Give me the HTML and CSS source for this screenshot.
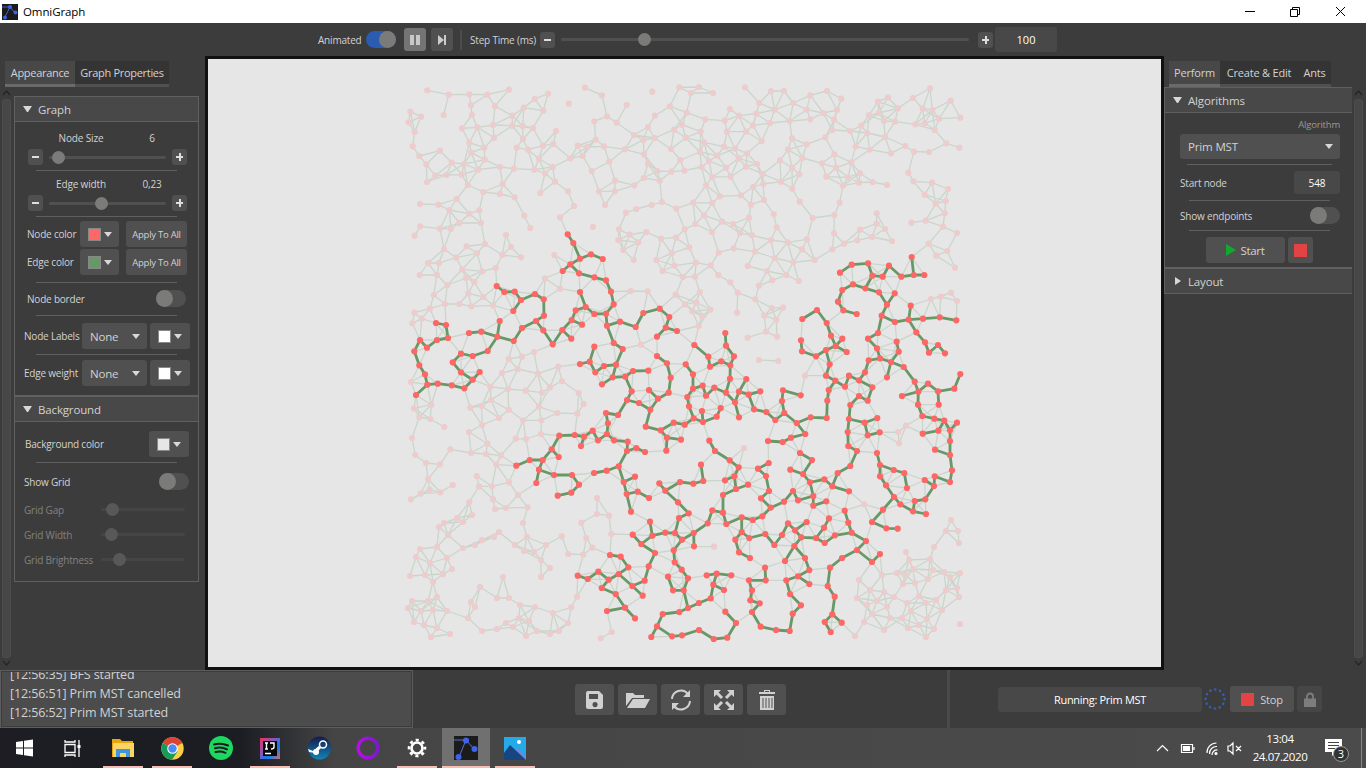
FILE: index.html
```html
<!DOCTYPE html>
<html lang="en">
<head>
<meta charset="utf-8">
<title>OmniGraph</title>
<link rel="stylesheet" href="styles.css">
</head>
<body>
<header class="titlebar">
  <svg class="app-icon" width="16" height="16" viewBox="0 0 16 16"><rect width="16" height="16" fill="#1b1b1b"/><path d="M0 3H8L3 13M8 3l5 6" stroke="#4a62b8" fill="none"/><g fill="#3c63e8"><circle cx="8" cy="3" r="2"/><circle cx="3" cy="13.500" r="2"/><circle cx="13.500" cy="8.500" r="2"/></g></svg>
  <span class="title">OmniGraph</span>
  <svg class="winctl" width="104" height="14" viewBox="0 0 104 14" fill="none" stroke="#000"><path d="M1 6.500h10M46.500 4.500h7v7h-7zM48.500 4v-1.500h7v7h-2M92 2l9 9m0-9l-9 9"/></svg>
</header>

<section class="toolbar">
  <span class="small animated">Animated</span>
  <span class="toggle on"></span>
  <span class="btn tb active"><svg width="12" height="12"><path d="M1 1h4v10H1zM7 1h4v10H7z" fill="#c8c8c8"/></svg></span>
  <span class="btn tb"><svg width="12" height="12"><path d="M2 1l6 5-6 5zM8 1h2v10H8z" fill="#ccc"/></svg></span>
  <span class="vbar"></span>
  <span class="small steptime">Step Time (ms)</span>
  <span class="btn step minus"></span>
  <span class="slider long"><i class="knob"></i></span>
  <span class="btn step plus"></span>
  <span class="field ms">100</span>
</section>

<main class="main">
  <aside class="left">
    <nav class="tabs"><span class="tab sel t-app">Appearance</span><span class="tab t-prop">Graph Properties</span></nav>
    <div class="left-body">
      <div class="scroll"><svg width="9" height="6"><path d="M1 5l3.500-4L8 5" fill="none" stroke="#252525" stroke-width="1.300"/></svg><i></i><svg width="9" height="6"><path d="M1 1l3.500 4L8 1" fill="none" stroke="#252525" stroke-width="1.300"/></svg></div>
      <div class="accordion">
        <h2 class="head"><i class="tri down"></i>Graph</h2>
        <div class="body graph-body">
          <div class="cap"><span class="c1">Node Size</span><span class="c2">6</span></div>
          <div class="srow"><span class="btn step minus"></span><span class="slider s1"><i class="knob"></i></span><span class="btn step plus"></span></div>
          <hr>
          <div class="cap"><span class="c1">Edge width</span><span class="c2">0,23</span></div>
          <div class="srow"><span class="btn step minus"></span><span class="slider s2"><i class="knob"></i></span><span class="btn step plus"></span></div>
          <hr>
          <div class="row colors"><span class="small lab">Node color</span><span class="btn pick"><i class="sw red"></i><i class="tri down"></i></span><span class="btn apply">Apply To All</span></div>
          <div class="row colors second"><span class="small lab">Edge color</span><span class="btn pick"><i class="sw green"></i><i class="tri down"></i></span><span class="btn apply">Apply To All</span></div>
          <hr class="h3">
          <div class="row border-row"><span class="small">Node border</span><span class="toggle"></span></div>
          <hr class="h4">
          <div class="row combos"><span class="small lab">Node Labels</span><span class="btn combo">None<i class="tri down"></i></span><span class="btn pick"><i class="sw white"></i><i class="tri down"></i></span></div>
          <hr class="h5">
          <div class="row combos last"><span class="small lab">Edge weight</span><span class="btn combo">None<i class="tri down"></i></span><span class="btn pick"><i class="sw white"></i><i class="tri down"></i></span></div>
        </div>
        <h2 class="head bg-head"><i class="tri down"></i>Background</h2>
        <div class="body bg-body">
          <div class="row bgcolor"><span class="small">Background color</span><span class="btn pick"><i class="sw grey"></i><i class="tri down"></i></span></div>
          <hr class="h6">
          <div class="row grid-row"><span class="small">Show Grid</span><span class="toggle"></span></div>
          <div class="row dim g1"><span class="small">Grid Gap</span><span class="slider"><i class="knob"></i></span></div>
          <div class="row dim g2"><span class="small">Grid Width</span><span class="slider"><i class="knob"></i></span></div>
          <div class="row dim g3"><span class="small">Grid Brightness</span><span class="slider"><i class="knob"></i></span></div>
        </div>
      </div>
    </div>
  </aside>

  <div class="canvas"><svg id="graph" width="953" height="608" viewBox="208 59 953 608"></svg></div>

  <aside class="right">
    <nav class="tabs"><span class="tab sel t-perf">Perform</span><span class="tab t-edit">Create &amp; Edit</span><span class="tab t-ants">Ants</span></nav>
    <div class="right-body">
      <div class="accordion">
        <h2 class="head"><i class="tri down"></i>Algorithms</h2>
        <div class="body alg-body">
          <div class="alg-cap">Algorithm</div>
          <div class="btn alg">Prim MST<i class="tri down"></i></div>
          <hr class="a1">
          <div class="row start-row"><span class="small">Start node</span><span class="field">548</span></div>
          <hr class="a2">
          <div class="row end-row"><span class="small">Show endpoints</span><span class="toggle"></span></div>
          <hr class="a3">
          <div class="row run"><span class="btn go"><svg width="10" height="12"><path d="M0 0l10 6-10 6z" fill="#0fa92f"/></svg>Start</span><span class="btn halt"><i></i></span></div>
        </div>
        <h2 class="head lay"><i class="tri side"></i>Layout</h2>
      </div>
      <div class="scroll"><svg width="9" height="6"><path d="M1 5l3.500-4L8 5" fill="none" stroke="#252525" stroke-width="1.300"/></svg><i></i><svg width="9" height="6"><path d="M1 1l3.500 4L8 1" fill="none" stroke="#252525" stroke-width="1.300"/></svg></div>
    </div>
  </aside>
</main>

<footer class="bottom">
  <div class="log"><div class="log-inner"><p>[12:56:35] BFS started</p><p>[12:56:51] Prim MST cancelled</p><p>[12:56:52] Prim MST started</p></div></div>
  <div class="actions">
    <span class="btn"><svg width="20" height="20" fill="#d0d0d0"><path fill-rule="evenodd" d="M3 1h11l4 4v12q0 2-2 2H3q-2 0-2-2V3q0-2 2-2zm1 3v5h9V4zm6 8a2.600 2.600 0 1 0 .1 0z"/></svg></span>
    <span class="btn"><svg width="24" height="20" fill="#d0d0d0"><path d="M0 16V3h7l2 2h9v3H6zM7 9h17l-5 9H1z"/></svg></span>
    <span class="btn"><svg width="22" height="22" fill="none" stroke="#d0d0d0" stroke-width="2"><path d="M2 10a9 9 0 0 1 16-5M20 12a9 9 0 0 1-16 5"/><path d="M20 1v7h-7zM2 21v-7h7z" fill="#d0d0d0" stroke="none"/></svg></span>
    <span class="btn"><svg width="22" height="22" stroke="#d0d0d0" stroke-width="3" fill="#d0d0d0"><path d="M4 4l5 5M18 4l-5 5M4 18l5-5M18 18l-5-5"/><path stroke="none" d="M1 1h7L1 8zM21 1h-7l7 7zM1 21h7l-7-7zM21 21h-7l7-7z"/></svg></span>
    <span class="btn"><svg width="18" height="22" fill="#d0d0d0"><path fill-rule="evenodd" d="M1 3h5V1h6v2h5v2H1zm6-1v1h4V2zM2 7h14v14H2zm2.500 2v10h1V9zm3 0v10h1V9zm3 0v10h1V9zm3 0v10h1V9z"/></svg></span>
  </div>
  <div class="vline"></div>
  <div class="status">
    <span class="field running">Running: Prim MST</span>
    <svg class="spin" width="24" height="24" viewBox="-12 -12 24 24" fill="none"><circle r="9.500" stroke="#355fae" stroke-width="2.600" stroke-linecap="round" stroke-dasharray="0.100 4.870"/></svg>
    <span class="btn stop"><i></i>Stop</span>
    <span class="btn lock"><svg width="12" height="15"><path d="M3 7V4.500a3 3 0 0 1 6 0V7" stroke="#7d7d7d" stroke-width="1.800" fill="none"/><path d="M0 6.500h12V15H0z" fill="#7d7d7d"/></svg></span>
  </div>
</footer>

<footer class="taskbar">
  <div class="tasks">
    <span class="task win"><svg width="17" height="18" fill="#fff"><path d="M0 3l7-1v6.500H0zM8 1.800L17 .5v8H8zM0 9.500h7V16l-7-1zM8 9.500h9v8L8 16.300z"/></svg></span>
    <span class="task tv"><svg width="17" height="17" fill="none" stroke="#fff" stroke-width="1.300"><path d="M1 4.500h10v8H1zM1 0v2h10V0M1 17v-2h10v2M15 0v17"/><path d="M13.500 5h3v3h-3z" fill="#fff" stroke="none"/></svg></span>
    <span class="task open exp"><svg width="22" height="20"><path d="M0 1h8l2 2h11v16H0z" fill="#e7a512"/><path d="M1 5h21v14H1z" fill="#fcd462"/><path d="M4 19v-8h14v8h-4v-4H8v4z" fill="#3c97dc"/></svg></span>
    <span class="task open"><svg width="23" height="23" viewBox="-11.500 -11.500 23 23"><circle r="11.200" fill="#fccd45"/><path d="M0 0L-9.700-5.600A11.200 11.200 0 0 1 9.700-5.600z" fill="#d94436"/><path d="M0 0L-9.700-5.600A11.200 11.200 0 0 0-.5 11.200L5 3z" fill="#169c58"/><circle r="5.300" fill="#fff"/><circle r="4.200" fill="#4b8bf5"/></svg></span>
    <span class="task"><svg width="24" height="24" viewBox="0 0 24 24"><circle cx="12" cy="12" r="12" fill="#1ed760"/><path d="M5 8.500q7-2 14 1M6 12.300q6-2 12 1M6.500 16q5-1.500 10 .8" fill="none" stroke="#191b20" stroke-width="2" stroke-linecap="round"/></svg></span>
    <span class="task open"><svg width="20" height="21"><defs><linearGradient id="ij" x2="1" y2="1"><stop stop-color="#ed315d"/><stop offset=".4" stop-color="#8956b8"/><stop offset=".65" stop-color="#087cfa"/><stop offset="1" stop-color="#d46a64"/></linearGradient></defs><rect width="20" height="21" fill="url(#ij)"/><rect x="3" y="3" width="14" height="15" fill="#080808"/><path d="M5 5h3M6.500 5v6M5 11h3M10 5h4v4q0 2-3 2M5 15.500h6" stroke="#fff" fill="none" stroke-width="1.400"/></svg></span>
    <span class="task"><svg width="23" height="24"><defs><linearGradient id="st" x2="0" y2="1"><stop stop-color="#15194c"/><stop offset="1" stop-color="#1185b5"/></linearGradient></defs><circle cx="11.500" cy="12" r="11.500" fill="url(#st)"/><path d="M0 13l5 2 6-5v3l-4 4-6-1z" fill="#fff"/><circle cx="8" cy="16" r="3" fill="#fff"/><circle cx="15" cy="8.500" r="3.500" fill="none" stroke="#fff" stroke-width="1.500"/><path d="M12 11l-5 5" stroke="#fff" stroke-width="3"/></svg></span>
    <span class="task"><svg width="24" height="24"><defs><linearGradient id="op"><stop stop-color="#b80de8"/><stop offset="1" stop-color="#7a1ad0"/></linearGradient></defs><circle cx="12" cy="12" r="9.800" fill="none" stroke="url(#op)" stroke-width="3.400"/></svg></span>
    <span class="task open"><svg width="20" height="20" viewBox="-10 -10 20 20" fill="none" stroke="#fff"><circle r="5.500" stroke-width="2.700"/><circle r="8" stroke-width="2.600" stroke-dasharray="3.140 3.140" stroke-dashoffset="1.570"/></svg></span>
    <span class="task open cur"><svg width="24" height="24"><path d="M0 0h24v24H0z" fill="#1b1b1b"/><path d="M0 4h12L5 21M12 4l8 9" stroke="#5873cf" fill="none"/><g fill="#3c63e8"><circle cx="12" cy="4.500" r="3"/><circle cx="4.500" cy="21" r="3"/><circle cx="20.500" cy="13" r="3"/></g></svg></span>
    <span class="task open"><svg width="22" height="23"><path d="M0 0h22v23H0z" fill="#26a9e9"/><path d="M8 15l6-4 8 9v3H8z" fill="#7287d8"/><path d="M0 16l6-8 16 15H0z" fill="#17457f"/><circle cx="15" cy="5" r="2" fill="#fff"/></svg></span>
  </div>
  <div class="tray">
    <svg width="86" height="18" fill="none" stroke="#fff" stroke-width="1.200"><path d="M1 12l5.500-5.500L12 12"/><path d="M25.500 5.500h11v8h-11zM38 8v3"/><path d="M27.500 7.500h6v4h-6z" fill="#fff"/><path d="M51 14A9.500 9.500 0 0 1 60.500 4M53.500 15A7 7 0 0 1 61 7.500M56 16A5 5 0 0 1 61.500 11" /><circle cx="60" cy="14.500" r="1" fill="#fff"/><path d="M72 7h2l3-3v11l-3-3h-2zM80 7l5 5m0-5l-5 5"/></svg>
    <div class="clock"><div>13:04</div><div>24.07.2020</div></div>
    <div class="notif"><svg width="17" height="17"><path d="M0 0h17v13h-6l-4 4v-4H0z" fill="#fff"/><path d="M3 3.500h11M3 6.500h11M3 9.500h7" stroke="#444"/></svg><b>3</b></div>
    <i class="edge"></i>
  </div>
</footer>
<script src="graph.js"></script>
</body>
</html>
```
FILE: styles.css
```css
* { box-sizing: border-box; }
body { margin: 0; width: 1366px; height: 768px; overflow: hidden; background: #3c3c3c; color: #d2d2d2; font: 11px "Open Sans", "Noto Sans", sans-serif; display: flex; flex-direction: column; }
svg { display: block; flex: none; }
p, h2 { margin: 0; font-weight: 400; }
span { white-space: nowrap; }
.titlebar { height: 23px; flex: none; background: #fff; color: #000; display: flex; align-items: center; padding-left: 2px; }
.title { margin-left: 5px; font-size: 11.5px; flex: 1; letter-spacing: -.1px; }
.winctl { margin-right: 18px; }
.small { font-size: 10px; letter-spacing: -.2px; }
.btn { background: #505050; border-radius: 3px; display: flex; align-items: center; justify-content: center; flex: none; }
.field { background: #484848; border-radius: 3px; display: flex; align-items: center; justify-content: center; color: #fff; flex: none; }
.toggle { width: 30px; height: 17px; border-radius: 9px; background: #505050; display: flex; flex: none; }
.toggle::before { content: ""; width: 17px; height: 17px; border-radius: 50%; background: #7b7b79; }
.toggle.on { background: #2b5caf; justify-content: flex-end; }
.slider { height: 3px; border-radius: 2px; background: #505050; display: flex; align-items: center; flex: none; }
.knob { width: 13px; height: 13px; border-radius: 50%; background: #7b7b79; flex: none; }
.step { width: 15px; height: 16px; }
.step::before { content: ""; width: 7px; height: 2px; background: #ddd; }
.plus::after { content: ""; width: 2px; height: 8px; background: #ddd; margin-left: -4.500px; margin-right: 2.500px; }
.tri { border: 4px solid transparent; border-bottom: 0; border-top: 5px solid #d8d8d8; width: 8px; height: 5px; flex: none; }
.tri.side { border: 4px solid transparent; border-right: 0; border-left: 6px solid #d8d8d8; width: 6px; height: 8px; }

.toolbar { height: 34px; flex: none; display: flex; align-items: center; padding: 0 0 1px 318px; }
.animated { width: 48px; }
.tb { width: 22px; height: 23px; margin-left: 8px; }
.tb + .tb { margin-left: 5px; }
.tb.active { background: #747474; }
.vbar { width: 2px; height: 20px; background: #4c4c4c; margin: 0 8px 0 7px; }
.steptime { width: 70px; }
.slider.long { width: 408px; margin: 0 9px 0 6px; padding-left: 77px; }
.ms { width: 62px; height: 25px; margin-left: 2px; }

.main { height: 613px; flex: none; display: flex; }
.left { width: 205px; flex: none; }
.canvas { width: 959px; height: 614px; border: 3px solid #111; background: #e6e6e6; flex: none; margin-top: -1px; }
.right { flex: 1; }
.tabs { display: flex; padding: 4px 0 0 5px; height: 30px; font-size: 11.500px; letter-spacing: -.15px; }
.tab { height: 26px; background: #343434; border-bottom: 3px solid #505050; display: flex; align-items: center; justify-content: center; }
.tab.sel { background: #484848; border-color: #6a6a6a; }
.left .tabs { letter-spacing: -.3px; font-size: 11px; }
.right .tabs { letter-spacing: -.2px; font-size: 11px; }
.t-app { width: 70px; } .t-prop { width: 94px; }
.left-body { display: flex; height: 583px; padding: 3px 0 2px 2px; }
.scroll { width: 9px; height: 576px; display: flex; flex-direction: column; justify-content: space-between; flex: none; }
.scroll i { width: 9px; height: 559px; border-radius: 3px; background: #474747; border: 1px solid #4d4d4d; }
.left .accordion { width: 185px; height: 486px; border: 1px solid #606060; margin: 6px 0 0 3px; }
.head { height: 25px; background: #484848; border-bottom: 1px solid #606060; display: flex; align-items: center; font-size: 11.500px; letter-spacing: -.15px; padding-left: 8px; }
.head .tri { margin-right: 6px; border-left-width: 4.500px; border-right-width: 4.500px; width: 9px; border-top-width: 6px; height: 6px; }
.head .tri.side { width: 6px; height: 8px; border-width: 4px 0 4px 6px; margin: 0 7px 0 2px; }
hr { margin: 0; height: 1px; border: 0; background: #606060; width: 141px; margin-left: 21px; }
.row { display: flex; align-items: center; }
.graph-body { height: 273px; padding-top: 7px; }
.cap { height: 18px; display: flex; align-items: center; font-size: 10px; letter-spacing: -.15px; }
.c1 { width: 76px; margin-left: 28px; text-align: center; }
.c2 { width: 50px; margin-left: 8px; text-align: center; }
.srow { display: flex; align-items: center; height: 20px; padding-left: 13px; }
.srow .slider { width: 117px; margin: 0 6px; }
.s1 .knob { margin-left: 3px; } .s2 .knob { margin-left: 46px; }
.srow + hr { margin-top: 3px; margin-bottom: 4px; }
.colors { padding-left: 12px; height: 26px; margin-top: 6px; }
.srow + hr + .colors { margin-top: 3px; }
.colors.second { margin-top: 2px; }
.colors .lab { width: 53px; }
.pick { width: 39px; height: 26px; gap: 3px; }
.sw { width: 13px; height: 13px; border: 1px solid #888; }
.red { background: #f66; } .green { background: #696; } .white { background: #fff; } .grey { background: #e6e6e6; }
.apply { width: 61px; height: 26px; font-size: 9.500px; margin-left: 7px; letter-spacing: -.25px; }
.h3 { margin-top: 7px; }
.border-row { padding: 0 12px 0 12px; justify-content: space-between; height: 17px; margin-top: 7px; }
.h4 { margin-top: 8px; }
.combos { padding-left: 9px; height: 26px; margin-top: 6px; }
.combos .lab { width: 58px; }
.h4 + .combos { margin-top: 7px; } .h5 { margin-top: 5px; }
.h5 + .combos { margin-top: 5px; }
.combo { width: 65px; height: 26px; justify-content: space-between; padding: 0 7px 0 8px; font-size: 11.500px; letter-spacing: -.2px; }
.combos .pick { width: 40px; margin-left: 3px; }
.bg-head { height: 27px; border-top: 2px solid #606060; }
.bg-body { padding-top: 9px; }
.bgcolor { padding: 0 9px 0 10px; justify-content: space-between; height: 26px; }
.bgcolor .pick { width: 40px; }
.h6 { margin-top: 5px; }
.grid-row { padding: 0 9px 0 9px; justify-content: space-between; height: 17px; margin-top: 10px; }
.dim { height: 25px; padding: 0 13px 0 9px; justify-content: space-between; opacity: .45; }
.g1 { margin-top: 7px; }
.dim .slider { width: 84px; }
.g1 .knob { margin-left: 5px; } .g2 .knob { margin-left: 4px; } .g3 .knob { margin-left: 12px; }

.t-perf { width: 51px; } .t-edit { width: 78px; } .t-ants { width: 33px; }
.right-body { display: flex; height: 583px; }
.right .accordion { width: 188px; border: 1px solid #606060; border-right: 0; border-bottom: 0; align-self: flex-start; }
.right .scroll { margin: 3px 0 0 2px; }
.alg-body { height: 154px; padding: 3px 12px 0 15px; }
.alg-cap { text-align: right; font-size: 9.500px; height: 18px; line-height: 18px; color: #999; letter-spacing: -.2px; }
.alg { height: 25px; justify-content: space-between; padding: 0 7px 0 8px; font-size: 11.500px; letter-spacing: -.15px; }
.a1 { margin: 5px 0 0 7px; width: 145px; }
.start-row { height: 23px; margin-top: 6px; justify-content: space-between; }
.start-row .field { width: 46px; height: 23px; font-size: 10px; }
.a2 { margin: 6px 0 0 9px; }
.end-row { height: 17px; margin-top: 6px; justify-content: space-between; }
.a3 { margin: 6px 0 0 9px; }
.run { margin-top: 6px; padding-left: 26px; gap: 3px; }
.go { width: 79px; height: 26px; gap: 4px; font-size: 11.500px; letter-spacing: -.3px; }
.halt { width: 25px; height: 26px; }
.halt i, .stop i { width: 13px; height: 13px; background: #e24444; }
.lay { height: 27px; border-top: 2px solid #606060; }

.bottom { height: 58px; flex: none; display: flex; }
.log { width: 413px; height: 58px; border: 1px solid #5c5c5c; padding: 1px 1px 1px 1px; flex: none; }
.log-inner { height: 54px; background: #4c4c4c; overflow: hidden; padding-left: 8px; display: flex; flex-direction: column; justify-content: flex-end; padding-bottom: 4px; }
.log p { font-size: 12.500px; line-height: 19px; height: 19px; flex: none; letter-spacing: -.12px; }
.actions { display: flex; gap: 4px; padding: 14px 0 0 162px; width: 534px; }
.actions .btn { width: 39px; height: 31px; }
.vline { width: 3px; background: #4a4a4a; }
.status { display: flex; align-items: center; padding-left: 48px; }
.running { width: 204px; height: 25px; letter-spacing: -.3px; }
.spin { margin: 0 3px 0 1px; }
.stop { width: 64px; height: 26px; gap: 6px; letter-spacing: -.2px; }
.lock { width: 25px; height: 26px; margin-left: 3px; background: #464646; }

.taskbar { height: 40px; flex: none; display: flex; justify-content: space-between; background: linear-gradient(90deg, #1d1d23 0, #1b1d23 240px, #454545 335px, #4b4b4b 1366px); color: #fff; }
.tasks { display: flex; gap: 1px; }
.task { width: 48px; height: 40px; display: flex; align-items: center; justify-content: center; }
.tv { width: 46px; margin-right: 3px; }
.task.open { background: linear-gradient(#f8bdb2, #f8bdb2) bottom center / 40px 2px no-repeat; }
.task.cur { background: linear-gradient(#f8bdb2, #f8bdb2) bottom / 100% 2px no-repeat, #707070; }
.tray { display: flex; align-items: center; }
.clock { width: 76px; text-align: center; font-size: 11.500px; line-height: 18px; letter-spacing: -.4px; }
.notif { width: 28px; height: 24px; margin: 6px 0 0 7px; position: relative; }
.notif b { position: absolute; left: 8px; top: 7px; width: 16px; height: 16px; border: 1px solid #999; border-radius: 50%; background: #333; font: 11px/14px "Open Sans", sans-serif; text-align: center; }
.edge { width: 1px; height: 40px; background: #888; margin: 0 4px 0 8px; }

.e { stroke: #cad6cb; stroke-width: 1.300; fill: none; }
.t { stroke: #669966; stroke-width: 2.800; fill: none; stroke-linecap: round; stroke-linejoin: round; }
.n { fill: #edcccd; }
.tn { fill: #ff6666; }
```
FILE: graph.js
```js
// Node coordinates are stored per tile, in units of 1/scale pixel from the tile origin.
const tiles = [
  { x: 400, y: 220, scale: 3, tree: `503,43 520,69 540,116 511,133 488,153|540,116 573,103 608,117|511,133 537,160 583,172 618,181 633,215 641,253 618,281 583,282 557,261 540,216|557,261 527,271 515,300 487,330 458,373 430,331 408,303 366,324 341,363 292,350 299,303|515,300 546,314|487,330 514,356|408,303 432,287 431,238 405,222 363,240 344,215 313,216 290,198|363,240 340,273|292,350 244,335 207,339|292,350 263,393 218,408 183,401 158,427 183,457 218,479 239,456|218,479 193,505 155,496 113,491 82,494 75,463 58,436 43,394 60,360 81,383 111,360 144,354 138,315 108,309|82,494 48,525|618,281 621,317 660,305 707,321 730,279 779,266 808,291 797,323 831,333|797,323 771,350|621,317 641,369 668,387 648,434 612,438 586,457 569,425 583,380|569,425 540,432|648,434 638,472 606,493|638,472 676,470 699,453 745,452|676,470 695,514 681,540 717,549 751,569 774,536 806,518 812,473 801,430 771,408|774,536 747,510|681,540 654,585 618,579 624,610 621,642 594,661 578,632 552,650 543,678|552,650 524,645 478,647 455,688 428,720 389,720 349,737|455,688 476,711|428,720 417,749 409,789|417,749 462,765 516,765 537,794 514,818 473,827|621,642 642,661 683,665 681,693 656,739 620,752 582,759|681,693 709,684 735,696|656,739 671,786 680,822 693,875|671,786 705,770|680,822 713,815 747,834|751,569 737,620 782,631 821,608 854,614|782,631 801,653 799,692|801,653 843,659`,
    nodes: `205,220 250,231 101,225 135,252 178,252 214,259 279,256 90,266 43,278 65,296 37,310 33,486 326,417 366,410 402,396 353,447 306,459 414,461 475,440 486,483 450,502 377,512 426,518 324,507 271,500 273,540 245,558 211,563 297,594 326,569 369,601 424,601 417,560 472,579 532,581 551,552 536,519 42,565 58,591 94,554 91,597 133,621 207,636 246,615 423,642 378,657 347,656 262,671 213,699 258,702 303,706 289,734 151,688 120,733 78,729 46,705 36,654 84,777 89,809 62,821 33,838 121,817 158,795 230,768 237,799 276,799 327,787 354,825 279,837 208,846 383,862 591,834 723,374 692,213 743,214 827,224 855,253` },
  { x: 680, y: 240, scale: 3, tree: `43,315 85,350 90,380 124,364 151,376 150,416 138,458 103,443 78,467 68,437 39,446 39,403 17,373|151,376 162,349 138,317 136,279|39,446 22,471 27,499 41,535 69,546 110,530 122,504|41,535 14,554|69,546 66,513|138,458 165,487 177,455 206,464 241,454|177,455 199,417|165,487 177,532|206,464 222,508 259,516 286,540 313,519 306,483 309,451 362,466|313,519 350,549 392,532 440,534 442,482 446,450 466,422 438,407 449,373 438,330 408,349 366,334 363,301|438,330 467,318 453,287 440,249 411,210 367,237|467,318 487,296|467,318 500,336|350,549 376,582 333,593 308,606 264,603|466,422 495,440 507,407 537,421 555,397 566,361 600,355 591,325 564,296 594,279 605,227 621,194 597,157 556,145 577,107 564,70 515,74 480,98|556,145 519,133 487,150 474,185 490,211 530,222|577,107 608,110 627,77 664,110 701,105 733,105|701,105 695,51|621,194 644,160|605,227 645,246 686,239 729,236 779,232 829,241|686,239 692,197|686,239 709,277 735,307 747,338 774,315 795,340|600,355 633,366 656,335 650,305|633,366 621,412|633,366 671,381 704,425 715,455 744,431 774,454 823,446 841,402|715,455 666,468|715,455 714,494 727,528 763,536 793,542 775,572 728,581|774,454 776,494|793,542 810,571 831,548|810,571 810,603 810,645 816,691 810,726 764,709 762,738 736,778 704,783 699,814 738,822|810,645 765,629|762,738 734,720|699,814 661,793 642,771 618,736 600,709 600,675 591,639|600,675 641,690 673,699 681,744|642,771 609,809 576,846 619,865 653,866|537,421 577,442 563,482 537,468 511,495 507,537 503,576 505,618 531,633 511,678 473,699 457,739 507,754|507,537 554,548 592,534|554,548 563,586 599,577|457,739 433,718 390,727 369,702 396,660 360,639|369,702 331,689|390,727 400,768 400,797 439,784|400,768 354,781 339,753 312,785 272,803 243,775 267,753 258,708 234,686 266,669|272,803 247,829 218,840 185,832 139,852 129,818 129,765 168,747 163,709 176,682 149,661 105,633 88,602|168,747 204,734|163,709 135,721|129,818 97,811 83,850|494,812 505,848 515,878`,
    nodes: `59,156 49,187 15,193 37,214 66,228 91,209 56,258 173,158 226,178 171,218 275,204 309,203 253,227 289,239 258,275 203,293 291,290 237,360 295,363 375,407 192,624 753,177 782,170 813,158 831,183 678,557 655,576 657,610 553,793 813,840` },
  { x: 560, y: 430, scale: 3, tree: `298,160 316,182 360,156 400,161 430,153 423,104|316,182 354,217 386,250 357,264 345,309 316,308 277,317 270,275|277,317 244,342 218,314|244,342 285,369 266,409 254,452 217,468 248,497|217,468 176,432 146,449 115,425 83,447 53,437|176,432 205,412 182,380 150,375|146,449 125,474 167,492 195,533 141,543|195,533 225,565|345,309 366,329 401,309 443,281 457,241 489,248|401,309 402,349|366,329 341,361 344,397 365,419 384,445 371,481 339,481 324,440|371,481 384,534 358,546 308,552 291,589 336,619 366,616 417,600 461,627 502,623 528,579 496,545|291,589 274,621|384,534 417,519 452,505 460,464 470,431 440,436|470,431 514,436|460,464 492,480|545,262 545,306 526,329 537,367 570,384|545,306 568,324 616,312 643,345 666,315 684,280 705,301 724,322 703,348 675,393|705,301 740,276|724,322 768,324 792,293 807,265|768,324 794,339 825,316 875,307|703,348 735,384 748,420 714,439 748,462|714,439 679,451 690,492 723,526 698,551 689,603 648,600 602,590 576,546 599,520 571,511 576,481 567,451 617,451 615,413|812,606 794,576 817,553 845,578|817,553 824,500 803,468 810,413 846,384 891,360 936,396 960,372|891,360 918,333 875,307`,
    nodes: `111,204 111,252 147,257 64,278 79,324 97,353 70,374 25,372 5,319 154,312 462,350 51,500 34,532 24,579 155,606 122,625` },
  { x: 400, y: 75, scale: 3, tree: ``,
    nodes: `82,46 146,59 208,58 262,59 327,44 131,120 213,91 285,93 216,120 186,160 232,157 279,150 282,188 337,122 337,152 371,98 404,72 444,56 430,107 368,153 399,159 506,86 369,192 350,218 384,224 429,212 460,207 468,168 417,251 458,276 403,284 435,295 465,320 421,354 504,349 522,393 480,427 31,110 63,125 26,142 44,171 38,214 58,243 79,268 120,227 155,263 106,302 81,321 139,300 185,299 192,267 214,233 208,203 253,218 254,254 234,284 203,330 250,351 300,276 342,281 308,327 300,357 344,367 373,422 391,459 170,372 115,389 60,387 148,405 208,416 238,406 243,444 178,444 153,461 120,461 61,454 44,482 132,522 255,507 200,514 231,535 168,548 117,564 84,564 59,600 111,600 187,583 198,609 247,589 287,579 223,621 307,540 333,516 318,480 363,547 463,540 435,610 480,641 142,630 579,456 555,38 606,61 621,124 650,143 680,90 583,139 587,194 612,214 561,216 533,212 548,243 511,250 575,288 628,260 645,317 597,349 644,349 615,390 703,331 731,309 678,413 709,402 755,390 786,381 829,401 854,463 828,488 783,491 739,471 689,479 657,463 655,495 670,525 715,502 701,555 815,535 769,555 788,588 823,572 849,606 674,223 702,180 730,195 764,189 744,156 765,122 810,94 838,37 757,50 732,238 744,266 772,288 779,317 814,290 853,287 841,255 813,222 822,164 846,149 857,188` },
  { x: 680, y: 75, scale: 3, tree: ``,
    nodes: `57,36 33,54 99,54 20,113 6,149 62,170 76,133 17,188 150,102 134,137 177,122 141,170 229,116 238,84 195,37 273,48 312,48 284,104 340,84 270,144 329,138 219,151 198,170 245,198 391,61 380,104 391,133 441,48 484,71 471,105 430,114 462,134 457,165 436,187 511,168 72,202 60,231 132,215 165,221 112,242 87,258 65,276 176,250 201,235 138,278 198,275 231,267 97,306 152,305 248,297 250,327 219,336 183,361 120,364 78,331 40,383 97,384 72,421 46,447 13,463 28,517 48,563 9,605 45,605 92,571 115,600 151,622 116,533 161,520 96,471 126,440 159,447 207,428 180,474 216,481 213,389 252,375 281,418 290,457 273,495 323,502 225,530 284,549 203,573 261,588 277,616 237,632 319,600 356,618 340,562 366,523 381,493 404,555 398,429 359,380 337,341 303,320 336,278 300,256 324,224 336,190 380,208 367,249 358,298 13,287 426,265 463,238 468,278 514,262 439,305 504,307 540,294 537,323 489,332 578,321 621,330 479,383 463,420 462,475 457,523 492,506 532,496 540,464 576,486 590,446 590,415 615,462 636,498 527,214 544,152 562,174 567,121 594,80 624,67 654,100 596,114 612,138 645,140 615,186 569,224 633,235 676,213 702,230 747,231 799,205 838,218 685,293 700,319 756,323 734,359 767,386 804,342 797,378 794,415 737,437 694,443 789,455 831,474 746,506 802,528 769,542 825,578 699,69 750,40 812,77 841,128 728,101 757,105 777,131 734,145 706,148 764,165` },
  { x: 0, y: 0, scale: 1, tree: ``,
    nodes: `439,527 444,523 457,518 448,535 463,522 472,515 495,509 506,508 523,523 527,537 524,551 499,532 494,537 437,547 420,549 416,557 430,563 447,558 463,548 475,545 482,540 410,576 425,575 443,574 433,582 452,569 480,587 497,598 503,577 515,545 534,552 541,560 546,545 550,568 541,577 509,598 520,605 408,608 412,601 421,611 414,622 424,625 431,637 437,628 450,634 433,610 447,611 428,601 437,597 468,618 475,607 471,602 482,631 497,629 506,623 513,627 519,618 529,621 537,631 526,636 550,634 559,631 553,613 535,607 958,531 959,543 946,531 934,547 930,559 933,570 909,560 906,552 913,569 905,575 897,573 944,572 950,577 960,573 957,588 946,590 959,597 928,579 915,583 903,584 884,592 870,590 859,580 857,598 867,605 877,601 887,607 894,597 907,603 919,596 926,603 936,600 960,624 942,610 902,618 911,611 908,628 919,625 927,619 934,629 926,637 884,630 890,618 864,622 872,614 882,575 855,636` }
];
const svg = document.getElementById('graph');
const nodes = [];
function node(tile, text, tree) {
  const [a, b] = text.split(',').map(Number);
  const x = tile.x + a / tile.scale, y = tile.y + b / tile.scale;
  let n = nodes.find(m => Math.hypot(m.x - x, m.y - y) < 2);
  if (!n) { n = { x, y, tree: false, links: new Set() }; nodes.push(n); }
  if (tree) n.tree = true;
  return n;
}
const treeEdges = [];
for (const t of tiles) {
  if (t.tree) for (const line of t.tree.split('|')) {
    const p = line.split(' ').map(s => node(t, s, true));
    for (let i = 1; i < p.length; i++) treeEdges.push([p[i - 1], p[i]]);
  }
}
for (const t of tiles) t.nodes.split(' ').forEach(s => node(t, s, false));
const seg = (a, b) => `M${a.x.toFixed(1)} ${a.y.toFixed(1)}L${b.x.toFixed(1)} ${b.y.toFixed(1)}`;
let faint = '';
for (const a of nodes) {
  nodes.map(b => [Math.hypot(a.x - b.x, a.y - b.y), b])
    .filter(([d, b]) => b !== a && d < 22.3)
    .sort((p, q) => p[0] - q[0]).slice(0, 5)
    .forEach(([, b]) => { if (!b.links.has(a)) { a.links.add(b); faint += seg(a, b); } });
}
const dots = tree => nodes.filter(n => n.tree === tree)
  .map(n => `<circle class="${tree ? 'tn' : 'n'}" cx="${n.x.toFixed(1)}" cy="${n.y.toFixed(1)}" r="3.1"/>`).join('');
svg.innerHTML = `<path class="e" d="${faint}"/>${dots(false)}<path class="t" d="${treeEdges.map(e => seg(...e)).join('')}"/>${dots(true)}`;
```
